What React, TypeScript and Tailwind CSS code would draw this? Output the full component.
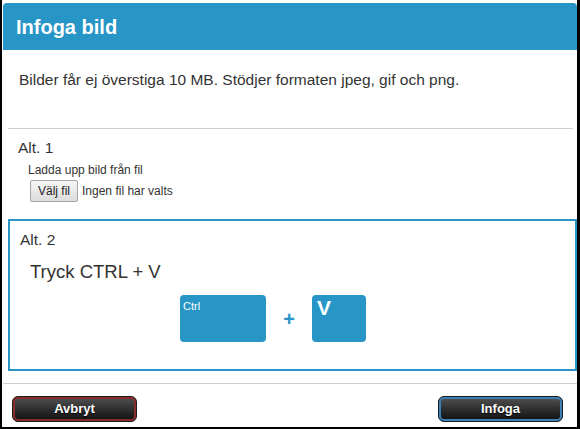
export default function App() {
  return (
    <div className="h-[429px] w-[580px] bg-white font-['Liberation_Sans',Arial,sans-serif] text-[#333]">
      <div className="flex h-full flex-col border-x-2 border-b-2 border-black border-r-[3px] pl-px pt-[3px]">
        {/* header */}
        <div className="flex h-[47px] items-center rounded-t-[4px] bg-[#2796c6] pl-[13px]">
          <h1 className="text-[20px] font-bold text-white">Infoga bild</h1>
        </div>

        <p className="pl-4 pt-[21px] text-[15.5px] leading-[18px]">
          Bilder får ej överstiga 10 MB. Stödjer formaten jpeg, gif och png.
        </p>

        <div className="ml-[5px] mr-1 mt-[39px] h-px bg-[#cfcfcf]" />

        {/* alt 1 */}
        <div className="pl-[15px] pt-[10px]">
          <p className="text-[15.5px] leading-[18px]">Alt. 1</p>
          <p className="mt-[6px] pl-[10px] text-[12px] leading-[14px]">Ladda upp bild från fil</p>
          <div className="ml-3 mt-[3px] flex items-center gap-1">
            <button className="h-[22px] rounded-[2px] border border-[#a5a5a5] bg-gradient-to-b from-[#f6f6f6] to-[#dcdcdc] px-[7px] text-[12px] text-[#222]">
              Välj fil
            </button>
            <span className="text-[12px]">Ingen fil har valts</span>
          </div>
        </div>

        {/* alt 2 */}
        <div className="ml-[5px] mr-0 mt-[17px] h-[152px] border-2 border-[#2796c6] pl-[10px] pt-[10px]">
          <p className="text-[15.5px] leading-[18px]">Alt. 2</p>
          <p className="mt-[12px] pl-[10px] text-[18.5px] leading-[22px]">Tryck CTRL + V</p>
          <div className="ml-[160px] mt-[12px] flex items-center">
            <div className="h-[47px] w-[86px] rounded-[4px] bg-[#2796c6] pl-[3px] pt-[5px] text-[11px] leading-[13px] text-white">
              Ctrl
            </div>
            <span className="w-[46px] text-center text-[20px] font-bold text-[#2796c6]">+</span>
            <div className="h-[47px] w-[54px] rounded-[4px] bg-[#2796c6] pl-[5px] pt-[1px] text-[21px] font-bold leading-[24px] text-white">
              V
            </div>
          </div>
        </div>

        <div className="mt-[12px] h-px bg-[#cfcfcf]" />

        {/* footer */}
        <div className="flex items-center justify-between pl-[9px] pr-[14px] pt-3">
          <button className="h-[26px] w-[125px] rounded-[6px] border border-[#1c1c1c] bg-[#1c1c1c]">
            <span className="flex h-full w-full items-center justify-center rounded-[5px] border-2 border-[#8a2a2c] bg-gradient-to-b from-[#4c4c4c] to-[#151515] text-[13px] font-bold text-white [text-shadow:0_1px_1px_#000]">
              Avbryt
            </span>
          </button>
          <button className="h-[26px] w-[125px] rounded-[6px] border border-[#1c1c1c] bg-[#1c1c1c]">
            <span className="flex h-full w-full items-center justify-center rounded-[5px] border-2 border-[#3b7fb4] bg-gradient-to-b from-[#4c4c4c] to-[#151515] text-[13px] font-bold text-white [text-shadow:0_1px_1px_#000]">
              Infoga
            </span>
          </button>
        </div>
      </div>
    </div>
  );
}
